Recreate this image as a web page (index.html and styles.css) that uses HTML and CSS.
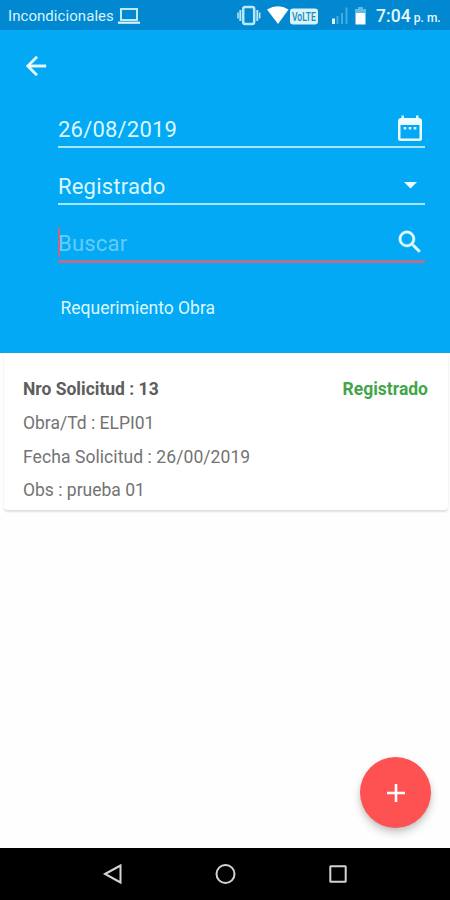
FILE: index.html
```html
<!DOCTYPE html>
<html lang="es">
<head>
<meta charset="utf-8">
<title>Requerimiento Obra</title>
<link rel="stylesheet" href="styles.css">
</head>
<body>
<div class="screen">
  <div class="status">
    <span class="carrier">Incondicionales</span>
    <svg class="laptop" width="22" height="18" viewBox="0 0 22 18" fill="none" stroke="#d5f4fb" stroke-width="1.8"><rect x="3" y="2" width="16" height="11"/><path d="M0 15.700h22" stroke-width="2.200"/></svg>
    <svg class="indicators" width="132" height="30" viewBox="0 0 132 30">
      <g fill="none" stroke="#b9e9f8"><rect x="6.200" y="7" width="11" height="17" rx="2" stroke-width="2.500"/><path d="M3.300 10v11M20.300 10v11" stroke-width="1.900"/><path d="M1 12.500v6M22.700 12.500v6" stroke-width="1.500"/></g>
      <path d="M30 9.500Q41 3 51.500 9.500L41 24Z" fill="#fff"/>
      <rect x="53" y="8.500" width="28" height="16" rx="3" fill="#d8f3fb"/>
      <text x="55" y="21" class="volte" textLength="24" lengthAdjust="spacingAndGlyphs">VoLTE</text>
      <g fill="#43addf"><path d="M99.500 16h2v8h-2zM104 13h2v11h-2zM108.500 7.500h2v16.500h-2z"/></g>
      <path d="M95 18.500h3v5.500h-3z" fill="#e6fafd"/>
      <path d="M121 7h5v2h3v4h-11v-4h3z" fill="#60bce5"/><path d="M118.500 13h10v11.500h-10z" fill="#f8fdfe"/>
    </svg>
    <span class="clock">7:04<small>p. m.</small></span>
  </div>
  <header class="header">
    <svg class="back" width="30" height="30" viewBox="0 0 24 24" fill="#e8fbff" stroke="#e8fbff" stroke-width=".3"><path d="M20 11H7.830l5.590-5.590L12 4l-8 8 8 8 1.410-1.410L7.830 13H20v-2z"/></svg>
    <div class="fields">
      <div class="field">
        <span>26/08/2019</span>
        <svg width="30" height="30" viewBox="0 0 30 30"><path fill="#edfdff" fill-rule="evenodd" d="M6.500 1.500h2.500V4h12V1.500h2.500V4Q27 4 27 7v17.500q0 2.500-2.500 2.500h-19Q3 27 3 24.500V7Q3 4 6.500 4zM5.500 11v13.500h19V11z"/><path d="M8.700 13h2.600v2.600H8.700zM13.700 13h2.600v2.600h-2.600zM18.700 13h2.600v2.600h-2.600z" fill="#d8f7ff"/></svg>
      </div>
      <div class="field">
        <span>Registrado</span>
        <svg width="30" height="30" viewBox="0 0 30 30"><path d="M9 12h13l-6.500 6.500z" fill="#edfdff"/></svg>
      </div>
      <div class="field search">
        <i class="caret"></i>
        <span class="hint">Buscar</span>
        <svg width="30" height="30" viewBox="0 0 24 24"><path fill="#e5fbff" stroke="#e5fbff" stroke-width=".3" d="M15.500 14h-.79l-.28-.27A6.471 6.471 0 0 0 16 9.500 6.500 6.500 0 1 0 9.500 16c1.610 0 3.090-.59 4.230-1.570l.27.28v.79l5 4.990L20.490 19l-4.990-5zm-6 0C7.010 14 5 11.990 5 9.500S7.010 5 9.500 5 14 7.010 14 9.500 11.990 14 9.500 14z"/></svg>
      </div>
    </div>
    <div class="title">Requerimiento Obra</div>
  </header>
  <main class="content">
    <article class="card">
      <div class="row strong"><span class="number">Nro Solicitud : 13</span><span class="state">Registrado</span></div>
      <div class="row work">Obra/Td : ELPI01</div>
      <div class="row date">Fecha Solicitud : 26/00/2019</div>
      <div class="row note">Obs : prueba 01</div>
    </article>
    <div class="fab"><svg width="30" height="30" viewBox="0 0 30 30"><path d="M15 6v18M6 15h18" stroke="#fff" stroke-width="2.600"/></svg></div>
  </main>
  <nav class="nav">
    <svg width="24" height="24" viewBox="0 0 24 24"><path d="M4 12L19.500 3.500v17z"/></svg>
    <svg width="24" height="24" viewBox="0 0 24 24"><circle cx="12.500" cy="12" r="9"/></svg>
    <svg width="24" height="24" viewBox="0 0 24 24"><rect x="4.300" y="4.300" width="15.400" height="15.400" rx=".5"/></svg>
  </nav>
</div>
</body>
</html>
```
FILE: styles.css
```css
* { box-sizing: border-box; }
body { margin: 0; font-family: Roboto, "Liberation Sans", sans-serif; }
svg { display: block; flex: none; }
.screen { width: 450px; height: 900px; display: flex; flex-direction: column; background: #fefefe; overflow: hidden; }
.status { height: 30px; flex: none; display: flex; align-items: center; padding-left: 8px; background: #0288d1; color: #d5f4fb; white-space: nowrap; }
.carrier { width: 110px; font-size: 15px; letter-spacing: .06px; line-height: 30px; padding-top: 2px; }
.laptop { margin-top: 1px; }
.indicators { margin-left: 97px; }
.volte { font-size: 12px; font-weight: 500; fill: #2189bd; }
.clock { margin-left: 7px; font-size: 17.5px; font-weight: 500; letter-spacing: .1px; padding-top: 2px; color: #e4f8fd; }
.clock small { font-size: 12px; margin-left: 3px; letter-spacing: 0; }
.header { height: 323px; flex: none; background: #03a9f5; padding-top: 21px; color: #dcf8ff; }
.back { margin-left: 21px; }
.fields { margin: 29px 25px 0 58px; }
.field { height: 57px; display: flex; justify-content: space-between; align-items: flex-end; border-bottom: 2px solid #a8e6fd; font-size: 22px; line-height: 26px; letter-spacing: .2px; position: relative; }
.field:first-child { height: 38px; }
.field span { margin-bottom: 3px; }
.field svg { margin-bottom: 3px; }
.field:first-child svg { margin-bottom: 2px; }
.search { height: 58px; border-color: #b5718b; border-bottom-width: 3px; }
.search svg { margin-bottom: 3px; }
.field .hint { color: #65cbf8; margin-bottom: 3px; }
.caret { position: absolute; left: 0; bottom: 3px; width: 2px; height: 30px; background: #c26880; }
.title { margin: 34px 0 0 60.5px; font-size: 17.5px; line-height: 22px; }
.content { flex: 1; position: relative; background: #fefefe; }
.card { margin: 0 2px 0 4px; height: 157px; padding: 19px 20px 0 19px; background: #fff; border-radius: 0 0 4px 4px; box-shadow: 0 2px 2px #0000001f; color: #737373; font-size: 17.5px; }
.row { height: 33.8px; line-height: 34px; white-space: nowrap; }
.date { letter-spacing: .08px; }
.strong { display: flex; justify-content: space-between; font-weight: 700; color: #5d5d5d; }
.state { color: #43a54a; }
.fab { position: absolute; right: 19px; bottom: 20px; width: 71px; height: 71px; border-radius: 50%; background: #fe5252; display: flex; align-items: center; justify-content: center; box-shadow: 0 5px 9px #0003, 0 2px 4px #0001; }
.nav { height: 52px; flex: none; background: #000; display: flex; justify-content: center; gap: 88.5px; align-items: center; }
.nav svg { fill: none; stroke: #d4d4d4; stroke-width: 2; }
```
